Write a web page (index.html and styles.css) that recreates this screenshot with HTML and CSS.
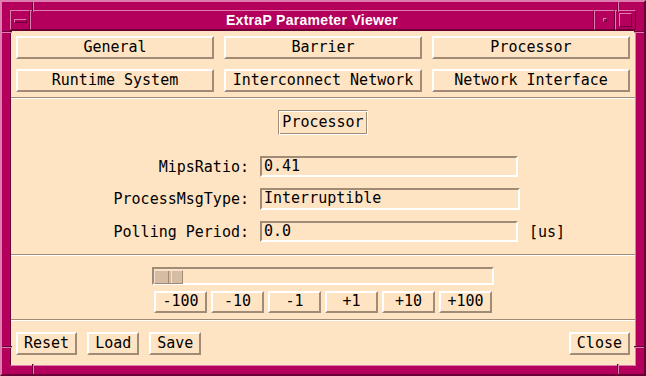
FILE: index.html
```html
<!DOCTYPE html>
<html>
	<head lang="en">
		<meta charset="UTF-8">
		<title>ExtraP Parameter Viewer</title>
		<link rel="stylesheet" href="styles.css">
	</head>
	<body>
		<div class="window">
			<div class="titlebar">
				<div class="tb-btn"><span class="menu-bar"></span></div>
				<div class="title">ExtraP Parameter Viewer</div>
				<div class="tb-btn tb-min"><span class="min-dot"></span></div>
				<div class="tb-btn tb-max"><span class="max-box"></span></div>
			</div>

			<div class="client">
				<div class="tabs">
					<div class="btn">General</div>
					<div class="btn">Barrier</div>
					<div class="btn">Processor</div>
					<div class="btn">Runtime System</div>
					<div class="btn">Interconnect Network</div>
					<div class="btn">Network Interface</div>
				</div>
				<div class="sep"></div>

				<div class="params">
					<div class="caption">Processor</div>
					<div class="form">
						<div class="label">MipsRatio:</div>
						<div class="field">0.41</div>
						<div></div>
						<div class="label">ProcessMsgType:</div>
						<div class="field field-wide">Interruptible</div>
						<div></div>
						<div class="label">Polling Period:</div>
						<div class="field">0.0</div>
						<div class="unit">[us]</div>
					</div>
				</div>
				<div class="sep"></div>

				<div class="stepper">
					<div class="trough">
						<div class="thumb"></div>
					</div>
					<div class="steps">
						<div class="btn step">-100</div>
						<div class="btn step">-10</div>
						<div class="btn step">-1</div>
						<div class="btn step">+1</div>
						<div class="btn step">+10</div>
						<div class="btn step">+100</div>
					</div>
				</div>
				<div class="sep"></div>

				<div class="actions">
					<div class="btn">Reset</div>
					<div class="btn">Load</div>
					<div class="btn">Save</div>
					<div class="btn close">Close</div>
				</div>
			</div>

			<!-- resize handle marks on the frame -->
			<span class="notch notch-v" style="left:30px;top:0"></span>
			<span class="notch notch-v" style="left:615px;top:0"></span>
			<span class="notch notch-v" style="left:30px;bottom:0"></span>
			<span class="notch notch-v" style="left:615px;bottom:0"></span>
			<span class="notch notch-h" style="left:0;top:29px"></span>
			<span class="notch notch-h" style="right:0;top:29px"></span>
			<span class="notch notch-h" style="left:0;top:344px"></span>
			<span class="notch notch-h" style="right:0;top:344px"></span>
		</div>
	</body>
</html>
```

FILE: styles.css
```css
*{
	padding: 0;
	margin: 0;
	box-sizing: border-box;
}
body{
	width: 646px;
	height: 376px;
	overflow: hidden;
	background: #b4005c;
	font-family: "DejaVu Sans Mono", monospace;
	font-size: 15px;
	color: #000;
}

.window{
	position: relative;
	width: 646px;
	height: 376px;
	background: #b4005c;
	border: 2px solid;
	border-color: #dc7fae #6a0035 #6a0035 #dc7fae;
	padding: 8px;
	display: flex;
	flex-direction: column;
}

/* title bar */
.titlebar{
	display: flex;
	height: 20px;
}
.tb-btn{
	width: 20px;
	height: 20px;
	border: 1px solid;
	border-color: #dc7fae #6a0035 #6a0035 #dc7fae;
	display: flex;
	align-items: center;
	justify-content: center;
}
.tb-min,.tb-max{
	width: 21px;
}
.menu-bar{
	width: 13px;
	height: 4px;
	margin-top: 1px;
	border: 1px solid;
	border-color: #dc7fae #6a0035 #6a0035 #dc7fae;
}
.min-dot{
	width: 4px;
	height: 4px;
	margin-left: 1px;
	border: 1px solid;
	border-color: #dc7fae #6a0035 #6a0035 #dc7fae;
}
.max-box{
	width: 13px;
	height: 14px;
	border: 1px solid;
	border-color: #dc7fae #6a0035 #6a0035 #dc7fae;
}
.title{
	flex: 1;
	height: 20px;
	border: 1px solid;
	border-color: #dc7fae #6a0035 #6a0035 #dc7fae;
	color: #fff;
	font-family: "Liberation Sans", Arial, sans-serif;
	font-weight: bold;
	font-size: 14px;
	letter-spacing: 0.3px;
	line-height: 18px;
	text-align: center;
}

.notch{
	position: absolute;
	display: block;
}
.notch-v{
	width: 2px;
	height: 10px;
	border-left: 1px solid #6a0035;
	border-right: 1px solid #dc7fae;
}
.notch-h{
	width: 10px;
	height: 2px;
	border-top: 1px solid #6a0035;
	border-bottom: 1px solid #dc7fae;
}

/* client area */
.client{
	flex: 1;
	background: #ffe4c4;
	border: 1px solid;
	border-color: #6a0035 #dc7fae #dc7fae #6a0035;
	display: flex;
	flex-direction: column;
}
.sep{
	height: 2px;
	border-top: 1px solid #a08c76;
	border-bottom: 1px solid #fff;
}

.btn{
	height: 23px;
	border: 2px solid;
	border-color: #fff #a08c76 #a08c76 #fff;
	background: #ffe4c4;
	padding: 0 6px 1px;
	line-height: 18px;
	text-align: center;
	white-space: nowrap;
}

.tabs{
	display: grid;
	grid-template-columns: repeat(3, 1fr);
	gap: 10px;
	padding: 5px;
}

.params{
	padding: 11px 0 12px;
	display: flex;
	flex-direction: column;
	align-items: center;
}
.caption{
	height: 25px;
	padding: 0 3px;
	border: 1px solid;
	border-color: #a08c76 #fff #fff #a08c76;
	box-shadow: inset 1px 1px 0 #fff, inset -1px -1px 0 #a08c76;
	line-height: 22px;
	margin-bottom: 21px;
}
.form{
	align-self: stretch;
	display: grid;
	grid-template-columns: 238px 258px auto;
	column-gap: 11px;
	row-gap: 11px;
	align-items: center;
}
.label{
	text-align: right;
	white-space: nowrap;
}
.field{
	width: 258px;
	height: 21px;
	border: 2px solid;
	border-color: #a08c76 #fff #fff #a08c76;
	padding: 0 2px;
	line-height: 16px;
	white-space: nowrap;
}
.field-wide{
	width: 260px;
	height: 22px;
	line-height: 17px;
}

.stepper{
	padding: 11px 0 6px;
	display: flex;
	flex-direction: column;
	align-items: center;
}
.trough{
	width: 342px;
	height: 18px;
	border: 2px solid;
	border-color: #a08c76 #fff #fff #a08c76;
	padding-top: 1px;
	margin-bottom: 6px;
}
.thumb{
	width: 29px;
	height: 14px;
	background: #d6bca2;
	border: 1px solid;
	border-color: #f4e2cf #a08c76 #a08c76 #f4e2cf;
	position: relative;
}
.thumb::after{
	content: "";
	position: absolute;
	left: 13px;
	top: 0;
	width: 2px;
	height: 12px;
	border-left: 1px solid #a08c76;
	border-right: 1px solid #f4e2cf;
}
.steps{
	display: flex;
	gap: 4px;
}
.step{
	width: 53px;
	height: 22px;
	padding: 0;
	line-height: 17px;
}

.actions{
	display: flex;
	gap: 10px;
	padding: 11px 5px 10px;
}
.close{
	margin-left: auto;
}
```
